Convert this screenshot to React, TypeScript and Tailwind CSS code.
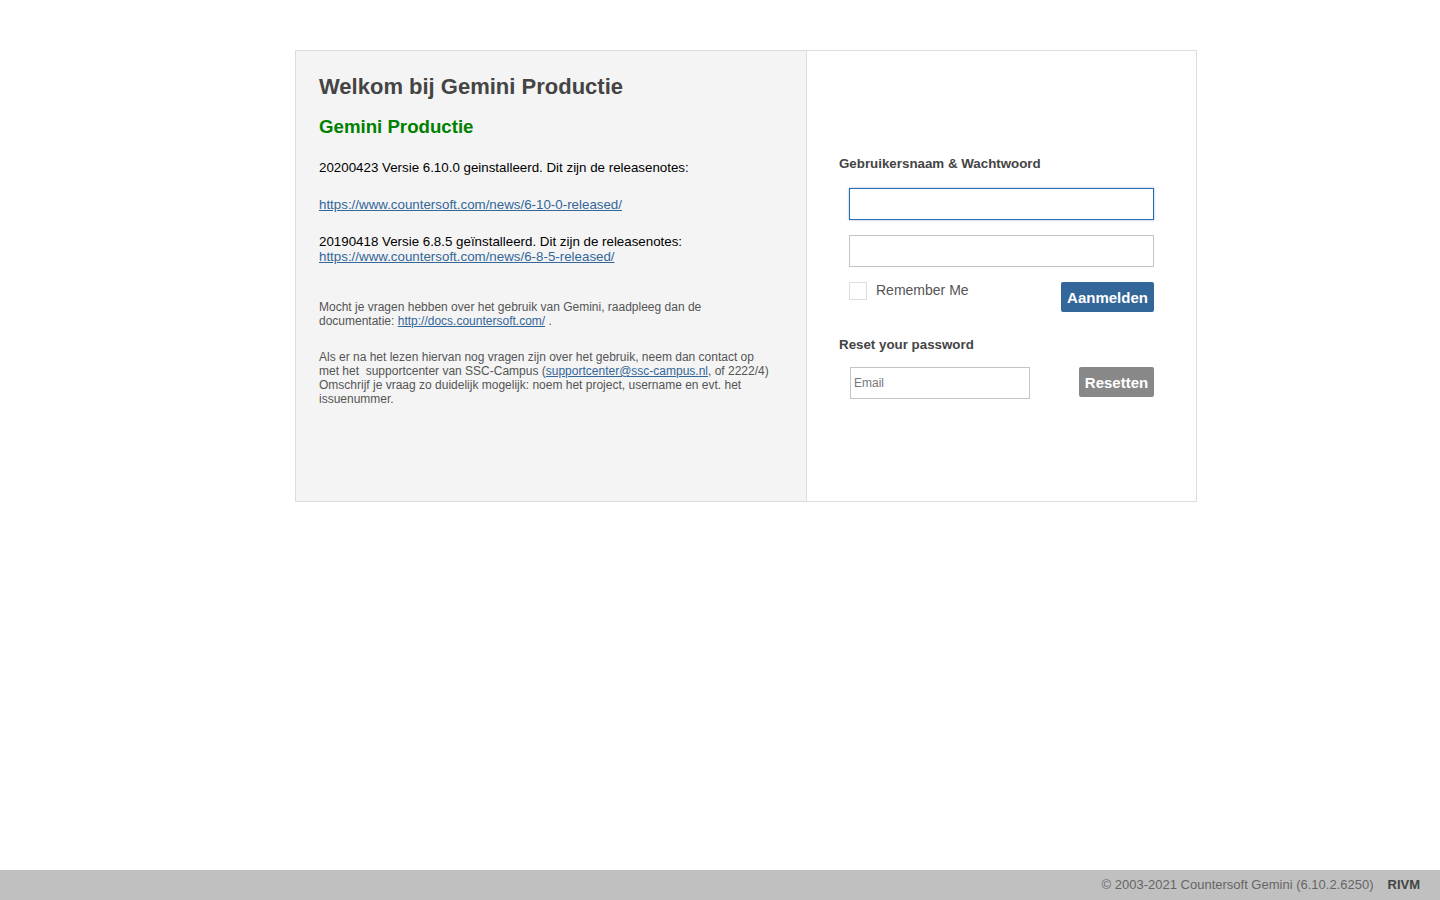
export default function App() {
  return (
    <div className="flex min-h-screen flex-col bg-white font-['Liberation_Sans',Arial,sans-serif]">
      <div className="flex-1">
        <div className="ml-[295px] mt-[50px] flex h-[452px] w-[902px] border border-[#dddddd]">
          {/* ── Left: welcome text ── */}
          <div className="w-[511px] border-r border-[#dddddd] bg-[#f4f4f4] pl-[23px] pr-[30px] pt-[23px]">
            <h1 className="text-[22px] font-bold leading-[26px] text-[#444444]">
              Welkom bij Gemini Productie
            </h1>
            <h2 className="mt-[16px] text-[18.67px] font-bold leading-[22px] text-[#008000]">
              Gemini Productie
            </h2>
            <p className="mt-[22px] text-[13.33px] leading-[15px] text-black">
              20200423 Versie 6.10.0 geinstalleerd. Dit zijn de releasenotes:
            </p>
            <p className="mt-[22px] text-[13.33px] leading-[15px]">
              <a href="#" className="text-[#336699] underline">
                https://www.countersoft.com/news/6-10-0-released/
              </a>
            </p>
            <p className="mt-[22px] text-[13.33px] leading-[15px] text-black">
              20190418 Versie 6.8.5 geïnstalleerd. Dit zijn de releasenotes:
              <br />
              <a href="#" className="text-[#336699] underline">
                https://www.countersoft.com/news/6-8-5-released/
              </a>
            </p>
            <p className="mt-[36px] text-[12px] leading-[14px] text-[#555555]">
              Mocht je vragen hebben over het gebruik van Gemini, raadpleeg dan de documentatie:{' '}
              <a href="#" className="text-[#336699] underline">
                http://docs.countersoft.com/
              </a>{' '}
              .
            </p>
            <p className="mt-[22px] text-[12px] leading-[14px] text-[#555555]">
              Als er na het lezen hiervan nog vragen zijn over het gebruik, neem dan contact op met het&nbsp; supportcenter van SSC-Campus (
              <a href="#" className="text-[#336699] underline">
                supportcenter@ssc-campus.nl
              </a>
              , of 2222/4) Omschrijf je vraag zo duidelijk mogelijk: noem het project, username en evt. het issuenummer.
            </p>
          </div>

          {/* ── Right: login form ── */}
          <div className="flex-1 pl-[32px] pr-[41px] pt-[105px]">
            <p className="text-[13.33px] font-bold leading-[15px] text-[#444444]">
              Gebruikersnaam &amp; Wachtwoord
            </p>
            <div className="ml-[10px] mt-[17px] space-y-[15px]">
              <input
                autoFocus
                className="block h-[32px] w-[305px] border border-[#2a6ab0] bg-white px-[3px] text-[13px] outline-none shadow-[0_0_2px_rgba(42,106,176,0.5)]"
              />
              <input
                type="password"
                className="block h-[32px] w-[305px] border border-[#c4c4c4] bg-white px-[3px] text-[13px] outline-none"
              />
            </div>
            <div className="ml-[10px] mt-[15px] flex w-[305px] items-start justify-between">
              <label className="flex items-center gap-[9px]">
                <span className="block h-[18px] w-[18px] border border-[#dddddd] bg-white" />
                <span className="-mt-[2px] text-[14px] leading-[16px] text-[#555555]">Remember Me</span>
              </label>
              <button className="h-[30px] w-[93px] rounded-[2px] bg-[#336699] pt-[2px] text-[15px] font-bold text-white">
                Aanmelden
              </button>
            </div>
            <p className="mt-[25px] text-[13.33px] font-bold leading-[15px] text-[#444444]">
              Reset your password
            </p>
            <div className="ml-[11px] mt-[15px] flex w-[304px] items-start justify-between">
              <input
                placeholder="Email"
                className="block h-[32px] w-[180px] border border-[#c4c4c4] bg-white px-[3px] text-[12px] outline-none placeholder:text-[#777777]"
              />
              <button className="h-[30px] w-[75px] rounded-[2px] bg-[#888888] pt-[2px] text-[15px] font-bold text-white">
                Resetten
              </button>
            </div>
          </div>
        </div>
      </div>

      {/* ── Footer ── */}
      <div className="flex h-[30px] items-center justify-end gap-[14px] bg-[#c0c0c0] pr-[20px] text-[13px]">
        <span className="text-[#666666]">© 2003-2021 Countersoft Gemini (6.10.2.6250)</span>
        <span className="font-bold text-[#444444]">RIVM</span>
      </div>
    </div>
  );
}
